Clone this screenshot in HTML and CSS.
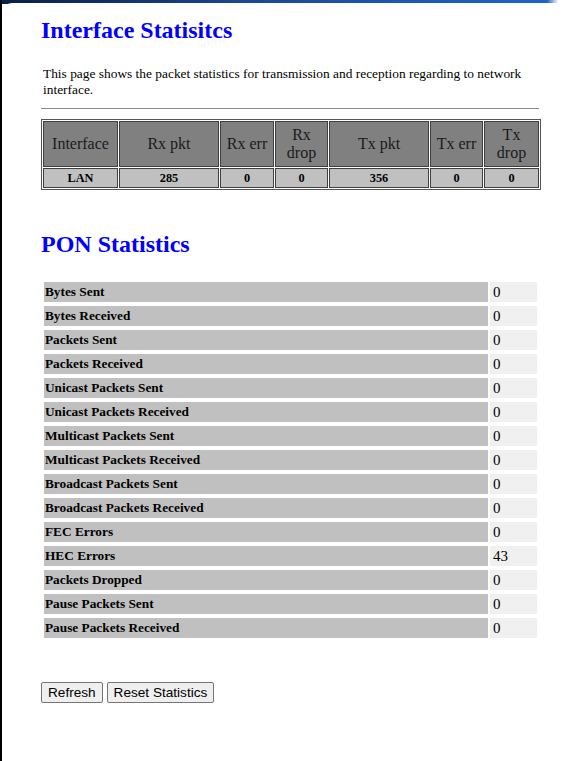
FILE: index.html
```html
<!DOCTYPE html>
<html>
<head>
<meta charset="utf-8">
<title>Interface Statistics</title>
<link rel="stylesheet" href="styles.css">
</head>
<body>
<div class="screen">
  <div class="page">
    <h1 class="title">Interface Statisitcs</h1>
    <p class="intro">This page shows the packet statistics for transmission and reception regarding to network interface.</p>
    <hr class="rule">
    <table class="ifstats">
      <colgroup>
        <col class="c1"><col class="c2"><col class="c3"><col class="c4"><col class="c5"><col class="c6"><col class="c7">
      </colgroup>
      <thead>
        <tr>
          <th>Interface</th><th>Rx pkt</th><th>Rx err</th><th>Rx drop</th><th>Tx pkt</th><th>Tx err</th><th>Tx drop</th>
        </tr>
      </thead>
      <tbody>
        <tr>
          <td>LAN</td><td>285</td><td>0</td><td>0</td><td>356</td><td>0</td><td>0</td>
        </tr>
      </tbody>
    </table>

    <h2 class="title pon-title">PON Statistics</h2>
    <table class="pon">
      <tr><td class="lbl">Bytes Sent</td><td class="val">0</td></tr>
      <tr><td class="lbl">Bytes Received</td><td class="val">0</td></tr>
      <tr><td class="lbl">Packets Sent</td><td class="val">0</td></tr>
      <tr><td class="lbl">Packets Received</td><td class="val">0</td></tr>
      <tr><td class="lbl">Unicast Packets Sent</td><td class="val">0</td></tr>
      <tr><td class="lbl">Unicast Packets Received</td><td class="val">0</td></tr>
      <tr><td class="lbl">Multicast Packets Sent</td><td class="val">0</td></tr>
      <tr><td class="lbl">Multicast Packets Received</td><td class="val">0</td></tr>
      <tr><td class="lbl">Broadcast Packets Sent</td><td class="val">0</td></tr>
      <tr><td class="lbl">Broadcast Packets Received</td><td class="val">0</td></tr>
      <tr><td class="lbl">FEC Errors</td><td class="val">0</td></tr>
      <tr><td class="lbl">HEC Errors</td><td class="val">43</td></tr>
      <tr><td class="lbl">Packets Dropped</td><td class="val">0</td></tr>
      <tr><td class="lbl">Pause Packets Sent</td><td class="val">0</td></tr>
      <tr><td class="lbl">Pause Packets Received</td><td class="val">0</td></tr>
    </table>

    <div class="actions">
      <button class="btn" type="button">Refresh</button>
      <button class="btn" type="button">Reset Statistics</button>
    </div>
  </div>
</div>
</body>
</html>
```

FILE: styles.css
```css
html, body {
  margin: 0;
  padding: 0;
}

body {
  background: #ffffff;
  font-family: "Liberation Serif", "Times New Roman", serif;
  color: #000;
}

.screen {
  min-height: 761px;
  box-sizing: border-box;
  padding: 3px 0 0 2px;
  background:
    linear-gradient(to right, #000 0, #000 2px, transparent 2px) left top / 100% 100% no-repeat,
    linear-gradient(to right, #0a1f44 0%, #11306a 20%, #1a4a94 45%, #1c56b0 70%, #1e64c8 97%, #ffffff 99%) left top / 100% 4px no-repeat,
    #ffffff;
}

.page {
  display: flow-root;
  background: #ffffff;
  border-top-left-radius: 10px;
  min-height: 758px;
  padding: 0 25px 0 39px;
}

.title {
  margin: 14px 0 0;
  font-size: 24px;
  line-height: 27px;
  font-weight: bold;
  color: #0000ff;
}

.intro {
  margin: 22px 0 0 2px;
  font-size: 13.4px;
  line-height: 16px;
}

.rule {
  margin: 10px 0 0;
  height: 0;
  border: 0;
  border-top: 1px solid #8a8a8a;
}

.ifstats {
  margin-top: 10px;
  width: 500px;
  table-layout: fixed;
  border-collapse: separate;
  border-spacing: 1px;
  border: 1px solid #555;
}

.ifstats .c1 { width: 75px; }
.ifstats .c2 { width: 100px; }
.ifstats .c3 { width: 54px; }
.ifstats .c4 { width: 53px; }
.ifstats .c5 { width: 100px; }
.ifstats .c6 { width: 53px; }
.ifstats .c7 { width: 55px; }

.ifstats th {
  box-sizing: border-box;
  background: #808080;
  border: 1px solid #404040;
  font-weight: normal;
  font-size: 16px;
  line-height: 18px;
  padding: 4px 2px;
  color: #1a1a1a;
  text-align: center;
}

.ifstats td {
  box-sizing: border-box;
  background: #c0c0c0;
  border: 1px solid #404040;
  font-weight: bold;
  font-size: 12.3px;
  line-height: 14px;
  padding: 2px;
  text-align: center;
}

.pon-title {
  margin-top: 41px;
}

.pon {
  margin: 20px 0 0 1px;
  border-collapse: separate;
  border-spacing: 2px 4px;
  width: 497px;
  table-layout: fixed;
}

.pon td {
  box-sizing: border-box;
  padding: 0;
  height: 20px;
  line-height: 20px;
}

.pon .lbl {
  width: 444px;
  background: #c0c0c0;
  font-weight: bold;
  font-size: 13.3px;
  padding-left: 1px;
}

.pon .val {
  width: 47px;
  background: #f0f0f0;
  font-size: 15px;
  padding-left: 3px;
}

.actions {
  display: flex;
  gap: 4px;
  margin-top: 40px;
}

.btn {
  box-sizing: border-box;
  height: 21px;
  padding: 1px 6px;
  border: 1px solid #767676;
  border-radius: 2px;
  background: #efefef;
  font-family: "Liberation Sans", Arial, sans-serif;
  font-size: 13.6px;
  color: #000;
}
```
